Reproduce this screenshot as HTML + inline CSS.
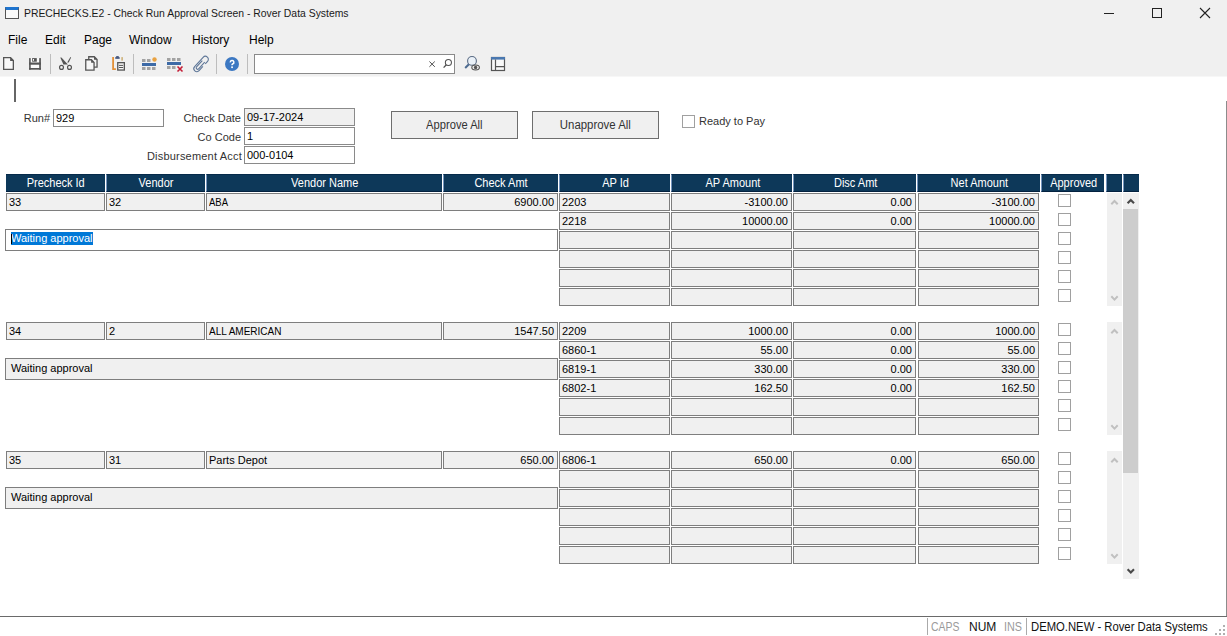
<!DOCTYPE html><html><head><meta charset="utf-8"><style>
*{margin:0;padding:0;box-sizing:border-box}
html,body{width:1227px;height:636px;overflow:hidden;background:#fff;font-family:"Liberation Sans",sans-serif;position:relative}
.abs{position:absolute}
svg{position:absolute;overflow:visible}
.t{position:absolute;white-space:nowrap;line-height:1}
.cell{position:absolute;background:#f0f0f0;border:1px solid #7e7e7e;height:18px;font-size:11px;color:#000;white-space:nowrap;overflow:hidden;line-height:16px;padding:0 2px}
.r{text-align:right;padding-right:3px}
.hd{position:absolute;top:174px;height:18px;background:#0d3859;border-top:1px solid #062a4a;border-bottom:1px solid #03213f;color:#fff;font-size:12px;line-height:16px;text-align:center;white-space:nowrap;overflow:hidden}
.cb{position:absolute;width:13px;height:13px;border:1px solid #a0a0a0;background:#fff}
.inp{position:absolute;height:18px;border:1px solid #8a8a8a;background:#fff;font-size:11px;line-height:16px;padding-left:2px;color:#000;white-space:nowrap}
.lbl{position:absolute;font-size:11px;line-height:1;color:#333;white-space:nowrap;text-align:right}
.btn{position:absolute;top:111px;width:127px;height:28px;border:1px solid #6e6e6e;background:#f0f0f0;font-size:12px;line-height:26px;text-align:center;color:#333}
.sep{position:absolute;top:54px;width:1px;height:20px;background:#bdbdbd}
</style></head><body>

<div class="abs" style="left:0;top:0;width:1227px;height:76px;background:#f0f0f0"></div>
<div class="abs" style="left:0;top:76px;width:1227px;height:1px;background:#f7f7f7"></div>
<div class="abs" style="left:5px;top:7px;width:14px;height:12px;border:1px solid #555;border-top:3px solid #1e74cf;background:#fafafa"></div>
<div class="t" style="left:24px;top:9px;font-size:10.4px;color:#1a1a1a">PRECHECKS.E2 - Check Run Approval Screen - Rover Data Systems</div>
<div class="abs" style="left:1104px;top:13px;width:10px;height:1px;background:#222"></div>
<div class="abs" style="left:1152px;top:8px;width:10px;height:10px;border:1px solid #222"></div>
<svg style="left:1199px;top:7px" width="13" height="13"><path d="M1 1L11 11M11 1L1 11" stroke="#222" stroke-width="1.1"/></svg>
<div class="t" style="left:8px;top:34px;font-size:12px;color:#000">File</div>
<div class="t" style="left:45px;top:34px;font-size:12px;color:#000">Edit</div>
<div class="t" style="left:84px;top:34px;font-size:12px;color:#000">Page</div>
<div class="t" style="left:129px;top:34px;font-size:12px;color:#000">Window</div>
<div class="t" style="left:192px;top:34px;font-size:12px;color:#000">History</div>
<div class="t" style="left:249px;top:34px;font-size:12px;color:#000">Help</div>
<svg style="left:0;top:50px" width="20" height="26"><path d="M3.65 7.65H10.6L13.35 10.4V19.35H3.65Z" fill="#f8f8f8" stroke="#555" stroke-width="1.3"/><path d="M10.1 7.3V10.9H13.9Z" fill="#555"/></svg>
<svg style="left:26px;top:50px" width="20" height="26"><rect x="3.1" y="8.1" width="11.8" height="11.6" fill="#fafafa"/><g fill="#555"><rect x="3.1" y="8.1" width="1.6" height="11.6"/><rect x="13.2" y="8.1" width="1.7" height="11.6"/><rect x="6.1" y="8.1" width="4.7" height="3.6"/><rect x="3.1" y="12.5" width="11.8" height="2.2"/><rect x="3.1" y="18" width="11.8" height="1.7"/></g><rect x="6.9" y="9" width="1.1" height="1.8" fill="#fafafa"/></svg>
<div class="sep" style="left:50px"></div>
<svg style="left:56px;top:50px" width="20" height="26"><path d="M4.3 7.4L5.4 7.5L11.9 14.6L7.4 14.5Z" fill="#555"/><path d="M14.4 7.1L15.1 7.6L12.7 12.5L11.2 12.6Z" fill="#555"/><circle cx="5.5" cy="17.4" r="1.95" fill="none" stroke="#555" stroke-width="1.2"/><circle cx="13.5" cy="17.4" r="1.95" fill="none" stroke="#555" stroke-width="1.2"/></svg>
<svg style="left:82px;top:50px" width="20" height="26"><path d="M6.75 6.75H12.3L15.05 9.5V17.05H6.75Z" fill="#f6f6f6" stroke="#555" stroke-width="1.3"/><path d="M12 6.4V9.8H15.4Z" fill="#555"/><path d="M3.75 9.75H9.4L12.05 12.4V20.05H3.75Z" fill="#f6f6f6" stroke="#555" stroke-width="1.3"/><path d="M9.1 9.4V12.7H12.4Z" fill="#555"/></svg>
<svg style="left:108px;top:50px" width="20" height="26"><path d="M5.1 6.9V19.1H7.9" fill="none" stroke="#e39138" stroke-width="1.8"/><rect x="7.2" y="7.4" width="4.5" height="1.4" fill="#4a5a80"/><ellipse cx="9.45" cy="7.3" rx="1.7" ry="1.3" fill="#4a5a80"/><rect x="13.4" y="7.1" width="1.4" height="3.5" fill="#c9aa6a"/><rect x="9.75" y="12.65" width="6.6" height="7.4" fill="#f6f6f6" stroke="#555" stroke-width="1.3"/><path d="M10.9 15.4H15.1M10.9 17.5H15.1" stroke="#555" stroke-width="1"/></svg>
<div class="sep" style="left:133px"></div>
<svg style="left:140px;top:50px" width="20" height="26"><rect x="2" y="9" width="3.5" height="3" fill="#a2a2a2"/><rect x="7" y="9" width="3.5" height="3" fill="#a2a2a2"/><circle cx="14.5" cy="9.5" r="2.2" fill="#e9a241"/><rect x="2" y="13" width="14" height="3" fill="#3d6aa6"/><rect x="2" y="17" width="3.5" height="3" fill="#a2a2a2"/><rect x="7" y="17" width="3.5" height="3" fill="#a2a2a2"/><rect x="12" y="17" width="3.5" height="3" fill="#a2a2a2"/></svg>
<svg style="left:165px;top:50px" width="20" height="26"><rect x="2" y="8" width="3.5" height="3" fill="#a2a2a2"/><rect x="7" y="8" width="3.5" height="3" fill="#a2a2a2"/><rect x="12" y="8" width="3.5" height="3" fill="#a2a2a2"/><rect x="2" y="12" width="14" height="3" fill="#3d6aa6"/><rect x="2" y="16" width="3.5" height="3" fill="#a2a2a2"/><rect x="7" y="16" width="3.5" height="3" fill="#a2a2a2"/><path d="M12.5 16.5L17.5 21.5M17.5 16.5L12.5 21.5" stroke="#c41d36" stroke-width="1.6"/></svg>
<svg style="left:190px;top:50px" width="20" height="26"><g transform="translate(11.1 14) rotate(42) translate(-3.6 -9.35)"><path d="M6.6 10V15.7A3 3 0 0 1 0.6 15.7V3A3 3 0 0 1 6.6 3V6.5M5 5.5V14.6A1.4 1.4 0 0 1 2.2 14.6V6" fill="none" stroke="#5f7798" stroke-width="1.1"/></g></svg>
<div class="sep" style="left:216px"></div>
<svg style="left:222px;top:50px" width="20" height="26"><circle cx="10" cy="14" r="7" fill="#3c78c2"/><path d="M8.3 12.4A1.8 1.8 0 1 1 10.6 14C10.1 14.3 10 14.7 10 15.3" fill="none" stroke="#fff" stroke-width="1.5"/><rect x="9.2" y="16.4" width="1.7" height="1.7" fill="#fff"/></svg>
<div class="sep" style="left:247px"></div>
<div class="abs" style="left:254px;top:54px;width:201px;height:20px;border:1px solid #8a8a8a;background:#fff"></div>
<svg style="left:424px;top:54px" width="30" height="20"><path d="M5.4 7.5L10.8 12.8M10.8 7.5L5.4 12.8" stroke="#505050" stroke-width="1"/><circle cx="24.4" cy="8.5" r="3.05" fill="none" stroke="#505050" stroke-width="1.05"/><path d="M22.3 10.7L19.6 13.6" stroke="#505050" stroke-width="1.3"/></svg>
<svg style="left:460px;top:50px" width="24" height="26"><circle cx="12" cy="10.9" r="4.4" fill="#eaf1f8" stroke="#5b6c84" stroke-width="1.1"/><path d="M8.9 14.2L5.2 18" stroke="#4d6b91" stroke-width="2"/><ellipse cx="15.6" cy="17.5" rx="3.8" ry="2.5" fill="#f0f0f0" stroke="#555" stroke-width="1.1"/><circle cx="15.6" cy="17.5" r="1.7" fill="#555"/></svg>
<svg style="left:488px;top:50px" width="20" height="26"><rect x="3.5" y="7.5" width="13" height="13" fill="#f8f8f8" stroke="#555" stroke-width="1.2"/><rect x="3" y="7" width="14" height="2.6" fill="#4a78b0"/><path d="M7.5 9.6V20.5M7.5 16.6H16.5" stroke="#555" stroke-width="1.2"/></svg>
<div class="abs" style="left:14px;top:79px;width:2px;height:23px;background:#666"></div>
<div class="lbl" style="left:0;top:113px;width:50px">Run#</div>
<div class="inp" style="left:53px;top:109px;width:111px">929</div>
<div class="lbl" style="left:100px;top:113px;width:141px">Check Date</div>
<div class="inp" style="left:244px;top:108px;width:111px;background:#f0f0f0">09-17-2024</div>
<div class="lbl" style="left:100px;top:132px;width:141px">Co Code</div>
<div class="inp" style="left:244px;top:127px;width:111px">1</div>
<div class="lbl" style="left:100px;top:151px;width:142px;letter-spacing:0.2px">Disbursement Acct</div>
<div class="inp" style="left:244px;top:146px;width:111px">000-0104</div>
<div class="btn" style="left:391px"><span style="display:inline-block;transform:scaleX(0.93)">Approve All</span></div>
<div class="btn" style="left:532px"><span style="display:inline-block;transform:scaleX(0.95)">Unapprove All</span></div>
<div class="cb" style="left:682px;top:115px"></div>
<div class="lbl" style="left:699px;top:116px;text-align:left">Ready to Pay</div>
<div class="hd" style="left:6px;width:99px;padding-left:1px"><span style="display:inline-block;transform:scaleX(0.917)">Precheck Id</span></div>
<div class="hd" style="left:106px;width:99px;border-left:1px solid #7393bd;padding-left:1px"><span style="display:inline-block;transform:scaleX(0.917)">Vendor</span></div>
<div class="hd" style="left:206px;width:236px;border-left:1px solid #7393bd;padding-left:1px"><span style="display:inline-block;transform:scaleX(0.917)">Vendor Name</span></div>
<div class="hd" style="left:443px;width:115px;border-left:1px solid #7393bd;padding-left:1px"><span style="display:inline-block;transform:scaleX(0.917)">Check Amt</span></div>
<div class="hd" style="left:559px;width:111px;border-left:1px solid #7393bd;padding-left:1px"><span style="display:inline-block;transform:scaleX(0.917)">AP Id</span></div>
<div class="hd" style="left:671px;width:121px;border-left:1px solid #7393bd;padding-left:1px"><span style="display:inline-block;transform:scaleX(0.917)">AP Amount</span></div>
<div class="hd" style="left:793px;width:123px;border-left:1px solid #7393bd;padding-left:1px"><span style="display:inline-block;transform:scaleX(0.917)">Disc Amt</span></div>
<div class="hd" style="left:917px;width:123px;border-left:1px solid #7393bd;padding-left:1px"><span style="display:inline-block;transform:scaleX(0.917)">Net Amount</span></div>
<div class="hd" style="left:1041px;width:63px;border-left:1px solid #7393bd;padding-left:1px"><span style="display:inline-block;transform:scaleX(0.917)">Approved</span></div>
<div class="hd" style="left:1106px;width:16px;border-left:1px solid #7393bd;padding-left:1px"><span style="display:inline-block;transform:scaleX(0.917)"></span></div>
<div class="hd" style="left:1123px;width:16px;border-left:1px solid #7393bd;padding-left:1px"><span style="display:inline-block;transform:scaleX(0.917)"></span></div>
<div class="cell" style="left:6px;top:193px;width:99px">33</div>
<div class="cell" style="left:106px;top:193px;width:99px">32</div>
<div class="cell" style="left:206px;top:193px;width:236px"><span style="display:inline-block;transform:scaleX(0.864);transform-origin:0 0">ABA</span></div>
<div class="cell r" style="left:443px;top:193px;width:115px">6900.00</div>
<div class="cell" style="left:5px;top:229px;width:553px;height:22px;background:#fff;line-height:20px;padding-left:5px"><span style="position:absolute;left:5px;top:2px;height:13px;line-height:13px;padding:0 0 0 0;background:#0078d7;color:#fff">Waiting approval</span></div>
<div class="abs" style="left:11px;top:234px;width:1px;height:10px;background:#000"></div>
<div class="cell" style="left:559px;top:193px;width:111px">2203</div>
<div class="cell r" style="left:671px;top:193px;width:121px">-3100.00</div>
<div class="cell r" style="left:793px;top:193px;width:123px">0.00</div>
<div class="cell r" style="left:918px;top:193px;width:121px">-3100.00</div>
<div class="cb" style="left:1058px;top:194px"></div>
<div class="cell" style="left:559px;top:212px;width:111px">2218</div>
<div class="cell r" style="left:671px;top:212px;width:121px">10000.00</div>
<div class="cell r" style="left:793px;top:212px;width:123px">0.00</div>
<div class="cell r" style="left:918px;top:212px;width:121px">10000.00</div>
<div class="cb" style="left:1058px;top:213px"></div>
<div class="cell" style="left:559px;top:231px;width:111px"></div>
<div class="cell r" style="left:671px;top:231px;width:121px"></div>
<div class="cell r" style="left:793px;top:231px;width:123px"></div>
<div class="cell r" style="left:918px;top:231px;width:121px"></div>
<div class="cb" style="left:1058px;top:232px"></div>
<div class="cell" style="left:559px;top:250px;width:111px"></div>
<div class="cell r" style="left:671px;top:250px;width:121px"></div>
<div class="cell r" style="left:793px;top:250px;width:123px"></div>
<div class="cell r" style="left:918px;top:250px;width:121px"></div>
<div class="cb" style="left:1058px;top:251px"></div>
<div class="cell" style="left:559px;top:269px;width:111px"></div>
<div class="cell r" style="left:671px;top:269px;width:121px"></div>
<div class="cell r" style="left:793px;top:269px;width:123px"></div>
<div class="cell r" style="left:918px;top:269px;width:121px"></div>
<div class="cb" style="left:1058px;top:270px"></div>
<div class="cell" style="left:559px;top:288px;width:111px"></div>
<div class="cell r" style="left:671px;top:288px;width:121px"></div>
<div class="cell r" style="left:793px;top:288px;width:123px"></div>
<div class="cell r" style="left:918px;top:288px;width:121px"></div>
<div class="cb" style="left:1058px;top:289px"></div>
<div class="abs" style="left:1107px;top:193px;width:15px;height:113px;background:#f0f0f0"></div>
<svg style="left:1107px;top:193px" width="15" height="113"><path d="M4.3 11.3L7.5 8L10.7 11.3" fill="none" stroke="#c0c0c0" stroke-width="2"/><path d="M4.3 103.3L7.5 106.6L10.7 103.3" fill="none" stroke="#c0c0c0" stroke-width="2"/></svg>
<div class="cell" style="left:6px;top:322px;width:99px">34</div>
<div class="cell" style="left:106px;top:322px;width:99px">2</div>
<div class="cell" style="left:206px;top:322px;width:236px"><span style="display:inline-block;transform:scaleX(0.91);transform-origin:0 0">ALL AMERICAN</span></div>
<div class="cell r" style="left:443px;top:322px;width:115px">1547.50</div>
<div class="cell" style="left:5px;top:358px;width:553px;height:22px;line-height:18px;padding-left:5px">Waiting approval</div>
<div class="cell" style="left:559px;top:322px;width:111px">2209</div>
<div class="cell r" style="left:671px;top:322px;width:121px">1000.00</div>
<div class="cell r" style="left:793px;top:322px;width:123px">0.00</div>
<div class="cell r" style="left:918px;top:322px;width:121px">1000.00</div>
<div class="cb" style="left:1058px;top:323px"></div>
<div class="cell" style="left:559px;top:341px;width:111px">6860-1</div>
<div class="cell r" style="left:671px;top:341px;width:121px">55.00</div>
<div class="cell r" style="left:793px;top:341px;width:123px">0.00</div>
<div class="cell r" style="left:918px;top:341px;width:121px">55.00</div>
<div class="cb" style="left:1058px;top:342px"></div>
<div class="cell" style="left:559px;top:360px;width:111px">6819-1</div>
<div class="cell r" style="left:671px;top:360px;width:121px">330.00</div>
<div class="cell r" style="left:793px;top:360px;width:123px">0.00</div>
<div class="cell r" style="left:918px;top:360px;width:121px">330.00</div>
<div class="cb" style="left:1058px;top:361px"></div>
<div class="cell" style="left:559px;top:379px;width:111px">6802-1</div>
<div class="cell r" style="left:671px;top:379px;width:121px">162.50</div>
<div class="cell r" style="left:793px;top:379px;width:123px">0.00</div>
<div class="cell r" style="left:918px;top:379px;width:121px">162.50</div>
<div class="cb" style="left:1058px;top:380px"></div>
<div class="cell" style="left:559px;top:398px;width:111px"></div>
<div class="cell r" style="left:671px;top:398px;width:121px"></div>
<div class="cell r" style="left:793px;top:398px;width:123px"></div>
<div class="cell r" style="left:918px;top:398px;width:121px"></div>
<div class="cb" style="left:1058px;top:399px"></div>
<div class="cell" style="left:559px;top:417px;width:111px"></div>
<div class="cell r" style="left:671px;top:417px;width:121px"></div>
<div class="cell r" style="left:793px;top:417px;width:123px"></div>
<div class="cell r" style="left:918px;top:417px;width:121px"></div>
<div class="cb" style="left:1058px;top:418px"></div>
<div class="abs" style="left:1107px;top:322px;width:15px;height:113px;background:#f0f0f0"></div>
<svg style="left:1107px;top:322px" width="15" height="113"><path d="M4.3 11.3L7.5 8L10.7 11.3" fill="none" stroke="#c0c0c0" stroke-width="2"/><path d="M4.3 103.3L7.5 106.6L10.7 103.3" fill="none" stroke="#c0c0c0" stroke-width="2"/></svg>
<div class="cell" style="left:6px;top:451px;width:99px">35</div>
<div class="cell" style="left:106px;top:451px;width:99px">31</div>
<div class="cell" style="left:206px;top:451px;width:236px">Parts Depot</div>
<div class="cell r" style="left:443px;top:451px;width:115px">650.00</div>
<div class="cell" style="left:5px;top:487px;width:553px;height:22px;line-height:18px;padding-left:5px">Waiting approval</div>
<div class="cell" style="left:559px;top:451px;width:111px">6806-1</div>
<div class="cell r" style="left:671px;top:451px;width:121px">650.00</div>
<div class="cell r" style="left:793px;top:451px;width:123px">0.00</div>
<div class="cell r" style="left:918px;top:451px;width:121px">650.00</div>
<div class="cb" style="left:1058px;top:452px"></div>
<div class="cell" style="left:559px;top:470px;width:111px"></div>
<div class="cell r" style="left:671px;top:470px;width:121px"></div>
<div class="cell r" style="left:793px;top:470px;width:123px"></div>
<div class="cell r" style="left:918px;top:470px;width:121px"></div>
<div class="cb" style="left:1058px;top:471px"></div>
<div class="cell" style="left:559px;top:489px;width:111px"></div>
<div class="cell r" style="left:671px;top:489px;width:121px"></div>
<div class="cell r" style="left:793px;top:489px;width:123px"></div>
<div class="cell r" style="left:918px;top:489px;width:121px"></div>
<div class="cb" style="left:1058px;top:490px"></div>
<div class="cell" style="left:559px;top:508px;width:111px"></div>
<div class="cell r" style="left:671px;top:508px;width:121px"></div>
<div class="cell r" style="left:793px;top:508px;width:123px"></div>
<div class="cell r" style="left:918px;top:508px;width:121px"></div>
<div class="cb" style="left:1058px;top:509px"></div>
<div class="cell" style="left:559px;top:527px;width:111px"></div>
<div class="cell r" style="left:671px;top:527px;width:121px"></div>
<div class="cell r" style="left:793px;top:527px;width:123px"></div>
<div class="cell r" style="left:918px;top:527px;width:121px"></div>
<div class="cb" style="left:1058px;top:528px"></div>
<div class="cell" style="left:559px;top:546px;width:111px"></div>
<div class="cell r" style="left:671px;top:546px;width:121px"></div>
<div class="cell r" style="left:793px;top:546px;width:123px"></div>
<div class="cell r" style="left:918px;top:546px;width:121px"></div>
<div class="cb" style="left:1058px;top:547px"></div>
<div class="abs" style="left:1107px;top:451px;width:15px;height:113px;background:#f0f0f0"></div>
<svg style="left:1107px;top:451px" width="15" height="113"><path d="M4.3 11.3L7.5 8L10.7 11.3" fill="none" stroke="#c0c0c0" stroke-width="2"/><path d="M4.3 103.3L7.5 106.6L10.7 103.3" fill="none" stroke="#c0c0c0" stroke-width="2"/></svg>
<div class="abs" style="left:1123px;top:193px;width:16px;height:386px;background:#f0f0f0"></div>
<div class="abs" style="left:1123px;top:209px;width:15px;height:264px;background:#cdcdcd"></div>
<svg style="left:1123px;top:193px" width="16" height="385"><path d="M4.6 10.3L7.8 7L11 10.3" fill="none" stroke="#4a4a4a" stroke-width="2.1"/><path d="M4.6 376.3L7.8 379.6L11 376.3" fill="none" stroke="#4a4a4a" stroke-width="2.1"/></svg>
<div class="abs" style="left:1226px;top:101px;width:1px;height:515px;background:#8c8c8c"></div>
<div class="abs" style="left:0;top:616px;width:1227px;height:1px;background:#6a6a6a"></div>
<div class="abs" style="left:927px;top:618px;width:1px;height:17px;background:#aaa"></div>
<div class="abs" style="left:1026px;top:618px;width:1px;height:17px;background:#aaa"></div>
<div class="t" style="left:931px;top:621px;font-size:12px;color:#9a9a9a;transform:scaleX(0.87);transform-origin:0 0">CAPS</div>
<div class="t" style="left:969px;top:621px;font-size:12px;color:#111;transform:scaleX(1.0);transform-origin:0 0">NUM</div>
<div class="t" style="left:1004px;top:621px;font-size:12px;color:#9a9a9a;transform:scaleX(0.9);transform-origin:0 0">INS</div>
<div class="t" style="left:1031px;top:621px;font-size:12px;color:#111;transform:scaleX(0.94);transform-origin:0 0">DEMO.NEW - Rover Data Systems</div>
<svg style="left:1212px;top:620px" width="15" height="16"><rect x="11" y="5" width="2" height="2" fill="#b0b0b0"/><rect x="7" y="9" width="2" height="2" fill="#b0b0b0"/><rect x="11" y="9" width="2" height="2" fill="#b0b0b0"/><rect x="3" y="13" width="2" height="2" fill="#b0b0b0"/><rect x="7" y="13" width="2" height="2" fill="#b0b0b0"/><rect x="11" y="13" width="2" height="2" fill="#b0b0b0"/></svg>
</body></html>
